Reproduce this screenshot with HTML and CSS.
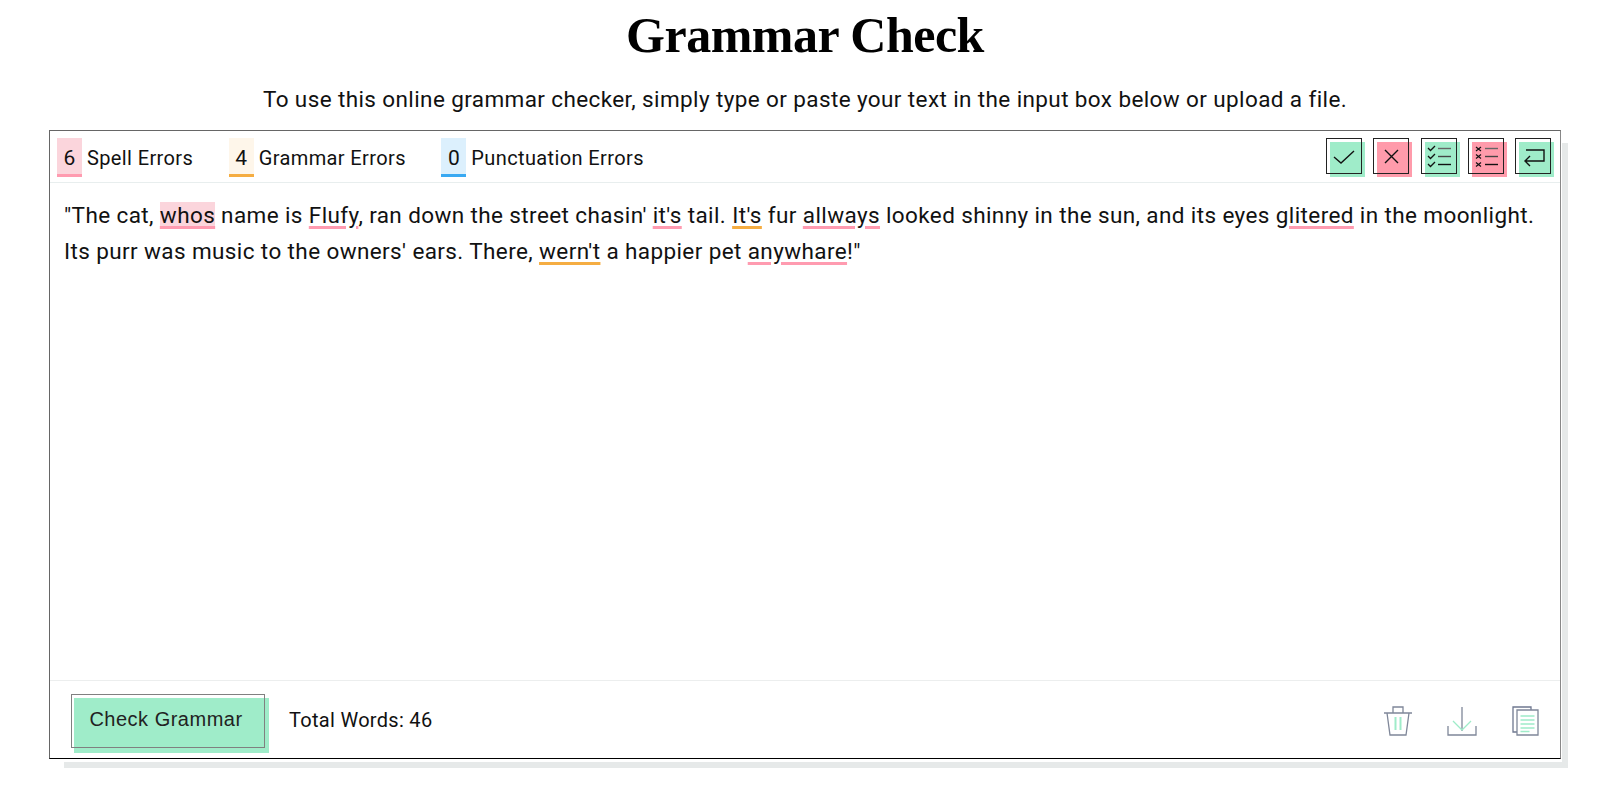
FILE: index.html
```html
<!DOCTYPE html>
<html>
<head>
  <meta charset="utf-8">
  <title>Grammar Check</title>
  <link rel="stylesheet" href="styles.css">
</head>
<body>
  <div class="page">
    <h1 class="title">Grammar Check</h1>
    <p class="intro">To use this online grammar checker, simply type or paste your text in the input box below or upload a file.</p>

    <div class="panel">
      <div class="toolbar">
        <div class="counts">
          <div class="count"><span class="badge badge-spell">6</span>Spell Errors</div>
          <div class="count"><span class="badge badge-grammar">4</span>Grammar Errors</div>
          <div class="count"><span class="badge badge-punct">0</span>Punctuation Errors</div>
        </div>
        <div class="actions">
          <button class="tool tool-green">
            <svg viewBox="0 0 34 34" width="34" height="34"><path d="M7 18l7 6L27 12" fill="none" stroke="#111" stroke-width="1.4"/></svg>
          </button>
          <button class="tool tool-pink">
            <svg viewBox="0 0 34 34" width="34" height="34"><path d="M11 11l13 13M24 11L11 24" fill="none" stroke="#111" stroke-width="1.4"/></svg>
          </button>
          <button class="tool tool-green">
            <svg viewBox="0 0 34 34" width="34" height="34"><path d="M6 9l2.500 2.500L13 7M6 17l2.500 2.500L13 15M6 25l2.500 2.500L13 23" fill="none" stroke="#111" stroke-width="1.300"/><path d="M16 9.500h13" stroke="#666" stroke-width="1.400"/><path d="M16 17.500h13" stroke="#444" stroke-width="1.400"/><path d="M16 25.500h13" stroke="#111" stroke-width="1.400"/></svg>
          </button>
          <button class="tool tool-pink">
            <svg viewBox="0 0 34 34" width="34" height="34"><path d="M7 8l5 4M12 8l-5 4M7 15.500l5 4M12 15.500l-5 4M7 23.500l5 4M12 23.500l-5 4" fill="none" stroke="#111" stroke-width="1.200"/><path d="M16 9.500h13" stroke="#666" stroke-width="1.400"/><path d="M16 17.500h13" stroke="#444" stroke-width="1.400"/><path d="M16 25.500h13" stroke="#111" stroke-width="1.400"/></svg>
          </button>
          <button class="tool tool-green">
            <svg viewBox="0 0 34 34" width="34" height="34"><path d="M10 11h18v11H10M14 17l-5 5 5 5" fill="none" stroke="#111" stroke-width="1.400"/></svg>
          </button>
        </div>
      </div>

      <div class="editor">
        <p>"The cat, <span class="spell spell-on">whos</span> name is <span class="spell">Flufy</span>, ran down the street chasin' <span class="spell">it's</span> tail. <span class="gram">It's</span> fur <span class="spell">allways</span> looked shinny in the sun, and its eyes <span class="spell">glitered</span> in the moonlight. Its purr was music to the owners' ears. There, <span class="gram">wern't</span> a happier pet <span class="spell">anywhare</span>!"</p>
      </div>

      <div class="footer">
        <div class="footer-left">
          <button class="check">Check Grammar</button>
          <span class="total">Total Words: 46</span>
        </div>
        <div class="footer-icons">
          <svg viewBox="0 0 30 30" width="30" height="30">
            <path d="M1 7h28M10 7V1h10v6M4 7l3 22h16l3-22" fill="none" stroke="#7f8799" stroke-width="1.300"/>
            <path d="M12.500 11v13M17.500 11v13" stroke="#9fecc9" stroke-width="2"/>
          </svg>
          <svg viewBox="0 0 30 30" width="30" height="30">
            <path d="M15 1v24M1 20v9h28v-9" fill="none" stroke="#7f8799" stroke-width="1.300"/>
            <path d="M6 15l9 9 9-9" fill="none" stroke="#9fecc9" stroke-width="1.300"/>
          </svg>
          <svg viewBox="0 0 30 30" width="30" height="30">
            <path d="M20 4V1H2v25h4" fill="none" stroke="#6f7890" stroke-width="1.300"/>
            <path d="M6 4h21v25H6z" fill="#fff" stroke="#7f8799" stroke-width="1.300"/>
            <path d="M9.500 10h14M9.500 14h14M9.500 18h14M9.500 22h14M9.500 25.500h9" stroke="#9fecc9" stroke-width="1.300"/>
          </svg>
        </div>
      </div>
    </div>
  </div>
</body>
</html>
```

FILE: styles.css
```css
body {
  margin: 0;
  background-color: #fff;
  color: #111;
  font-family: Roboto, sans-serif;
}

.page {
  padding: 0 39px 27px 49px;
}

.title {
  margin: 0;
  padding-top: 5px;
  font-family: "Liberation Serif", serif;
  font-size: 50px;
  line-height: 60px;
  font-weight: bold;
  letter-spacing: -0.5px;
  text-align: center;
  color: #000;
}

.intro {
  margin: 20px 0 0;
  font-size: 22.500px;
  letter-spacing: 0.39px;
  line-height: 28px;
  text-align: center;
}

/* the grey sheet behind is two shadows, it starts further in on the left and top */
.panel {
  display: flex;
  flex-direction: column;
  box-sizing: border-box;
  height: 629px;
  margin-top: 17px;
  background-color: #fff;
  border: 1px solid #666;
  border-right-color: #888;
  border-bottom-color: #000;
  box-shadow: 1px 3px 0 #fff, 11px 9px 0 -4px #e6e9e9, 11px 13px 0 -4px #e6e9e9;
}

.toolbar {
  display: flex;
  justify-content: space-between;
  align-items: center;
  height: 52px;
  box-sizing: border-box;
  padding: 0 9px 0 7px;
  border-bottom: 1px solid #e8eeee;
}

.counts {
  display: flex;
  gap: 35.500px;
  margin-top: 2px;
}

.count {
  display: flex;
  align-items: center;
  font-size: 20px;
  letter-spacing: 0.38px;
}

.badge {
  display: block;
  box-sizing: border-box;
  width: 25px;
  height: 39px;
  margin-right: 5px;
  line-height: 40px;
  text-align: center;
  font-size: 21px;
  letter-spacing: 0;
}

.badge-spell {
  background-color: #fbd5dc;
  border-bottom: 3px solid #ff9bb0;
}

.badge-grammar {
  background-color: #fef6ea;
  border-bottom: 3px solid #f5ad42;
}

.badge-punct {
  background-color: #dcf0fd;
  border-bottom: 3px solid #39a9f2;
}

.actions {
  display: flex;
  gap: 11.250px;
}

.tool {
  position: relative;
  z-index: 0;
  width: 36px;
  height: 36px;
  padding: 0;
  border: none;
  background: none;
  margin-bottom: 1px;
}

.tool svg {
  position: absolute;
  left: 1px;
  top: 1px;
}

.tool::before {
  content: "";
  position: absolute;
  z-index: -1;
  left: 4px;
  top: 4px;
  right: -3px;
  bottom: -3px;
}

.tool::after {
  content: "";
  position: absolute;
  left: 0;
  top: 0;
  right: 0;
  bottom: 0;
  border: 1px solid #222;
}

.tool-green::before {
  background-color: #9fecc9;
}

.tool-pink::before {
  background-color: #ff9bab;
}

.editor {
  flex: 1;
  padding: 14px;
  font-size: 22.500px;
  letter-spacing: 0.39px;
  line-height: 36px;
}

.editor p {
  margin: 0;
}

.spell {
  text-decoration: underline 3px #ff9bb0;
  text-underline-offset: 3px;
}

.spell-on {
  background-color: #fbd5dc;
}

.gram {
  text-decoration: underline 3px #f5ad42;
  text-underline-offset: 3px;
}

.footer {
  display: flex;
  justify-content: space-between;
  align-items: center;
  height: 78px;
  box-sizing: border-box;
  padding: 3px 19px 0 21px;
  border-top: 1px solid #eceeee;
}

.footer-left {
  display: flex;
  align-items: center;
  gap: 24px;
}

.check {
  position: relative;
  z-index: 0;
  width: 194px;
  height: 54px;
  padding: 0 4px 3px 0;
  border: none;
  background: none;
  color: #222;
  font-family: "Liberation Sans", sans-serif;
  font-size: 20px;
  letter-spacing: 0.5px;
}

.check::before {
  content: "";
  position: absolute;
  z-index: -1;
  left: 3px;
  top: 4px;
  right: -4px;
  bottom: -5px;
  background-color: #9fecc9;
}

.check::after {
  content: "";
  position: absolute;
  left: 0;
  top: 0;
  right: 0;
  bottom: 0;
  border: 1px solid #808080;
}

.total {
  margin-bottom: 3px;
  font-size: 20px;
  letter-spacing: 0.3px;
}

.footer-icons {
  display: flex;
  gap: 34px;
}
```
